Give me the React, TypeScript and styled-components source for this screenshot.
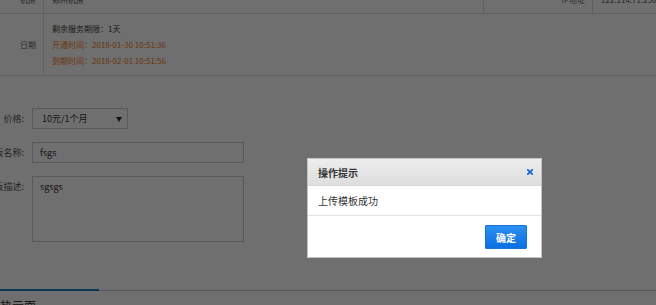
import styled, { createGlobalStyle } from 'styled-components'

const GlobalStyle = createGlobalStyle`
    html, body {
        margin: 0;
        padding: 0;
        background: #fff;
        overflow: hidden;
    }
    body {
        font-family: "Noto Sans CJK SC", "Noto Sans", sans-serif;
        color: #333;
    }
`;

const Page = styled.div`
    width: 656px;
    height: 305px;
    overflow: hidden;
    background: #fff;
    display: flex;
    flex-direction: column;
`;

const InfoTable = styled.div`
    margin-top: -15px;
    display: flex;
    flex-direction: column;
`;

const Row = styled.div<{ $cols: string; $h: number }>`
    display: grid;
    grid-template-columns: ${p => p.$cols};
    min-height: ${p => p.$h}px;
    border-bottom: 1px solid #ddd;
`;

const Label = styled.div`
    display: flex;
    align-items: center;
    justify-content: flex-end;
    padding-right: 7px;
    font-size: 8px;
    color: #666;
    border-right: 1px solid #ddd;
`;

const Value = styled.div<{ $last?: boolean }>`
    display: flex;
    flex-direction: column;
    justify-content: center;
    padding-left: 8px;
    font-size: 8px;
    color: #555;
    white-space: nowrap;
    border-right: ${p => (p.$last ? 'none' : '1px solid #ddd')};
`;

const Lines = styled.div`
    display: flex;
    flex-direction: column;
    padding: 7px 0 6px 8px;
`;

const Line = styled.div<{ $orange?: boolean }>`
    font-size: 8px;
    line-height: 16px;
    color: ${p => (p.$orange ? '#f57a1c' : '#3a3a3a')};
    white-space: nowrap;
`;

const Form = styled.div`
    display: grid;
    grid-template-columns: 24px 1fr;
    column-gap: 8px;
    row-gap: 13px;
    padding-top: 32px;
`;

const FieldLabel = styled.div`
    display: flex;
    justify-content: flex-end;
    font-size: 9px;
    line-height: 21px;
    color: #555;
    white-space: nowrap;
`;

const Select = styled.div`
    box-sizing: border-box;
    width: 96px;
    height: 21px;
    border: 1px solid #ccc;
    display: flex;
    align-items: center;
    justify-content: space-between;
    padding: 0 5px 0 9px;
    font-size: 9px;
    color: #333;
`;

const Caret = styled.span`
    font-size: 6px;
    color: #222;
`;

const Input = styled.div`
    box-sizing: border-box;
    width: 212px;
    height: 21px;
    border: 1px solid #ccc;
    padding-left: 7px;
    font-size: 9px;
    line-height: 19px;
    color: #333;
`;

const TextArea = styled(Input)`
    height: 66px;
    padding-top: 4px;
    line-height: 12px;
`;

const TabBar = styled.div`
    margin-top: 48px;
    border-top: 1px solid #c8c8c8;
    display: flex;
`;

const Tab = styled.div`
    width: 99px;
    margin-top: -2px;
    border-top: 2px solid #1683bd;
    padding-top: 6px;
    font-size: 12px;
    color: #333;
    white-space: nowrap;
`;

const Overlay = styled.div`
    position: fixed;
    inset: 0;
    background: rgba(0, 0, 0, 0.565);
`;

const Dialog = styled.div`
    position: absolute;
    left: 307px;
    top: 158px;
    width: 235px;
    box-sizing: border-box;
    background: #fff;
    border: 1px solid #c4c4c4;
    display: flex;
    flex-direction: column;
`;

const DialogHeader = styled.div`
    height: 26px;
    display: flex;
    align-items: center;
    justify-content: space-between;
    padding: 0 8px 0 10px;
    background: linear-gradient(#ededed, #dedede);
    border-bottom: 1px solid #d6d6d6;
    font-size: 10px;
    font-weight: bold;
    color: #333;
`;

const Close = styled.svg`
    width: 6px;
    height: 6px;
`;

const DialogBody = styled.div`
    height: 29px;
    display: flex;
    align-items: center;
    padding: 0 10px;
    font-size: 10px;
    color: #333;
    border-bottom: 1px solid #e2e2e2;
`;

const DialogFooter = styled.div`
    height: 41px;
    display: flex;
    align-items: center;
    justify-content: flex-end;
    padding-right: 14px;
`;

const Button = styled.button`
    width: 42px;
    height: 24px;
    margin-top: 1px;
    border: 1px solid #1a72d8;
    background: linear-gradient(#2b8ff2, #0c6fe2);
    color: #fff;
    font-family: inherit;
    font-size: 10px;
    font-weight: bold;
    padding: 0;
    border-radius: 1px;
`;

export default function App() {
    return (
        <>
            <GlobalStyle />
            <Page>
                <InfoTable>
                    <Row $cols="44px 440px 109px 1fr" $h={28}>
                        <Label>机房</Label>
                        <Value>郑州机房</Value>
                        <Label>IP地址</Label>
                        <Value $last>122.114.71.230</Value>
                    </Row>
                    <Row $cols="44px 1fr" $h={60}>
                        <Label>日期</Label>
                        <Lines>
                            <Line>剩余服务期限：1天</Line>
                            <Line $orange>开通时间：2018-01-30 10:51:36</Line>
                            <Line $orange>到期时间：2018-02-01 10:51:56</Line>
                        </Lines>
                    </Row>
                </InfoTable>
                <Form>
                    <FieldLabel>价格:</FieldLabel>
                    <Select>
                        <span>10元/1个月</span>
                        <Caret>▼</Caret>
                    </Select>
                    <FieldLabel>模板名称:</FieldLabel>
                    <Input>fsgs</Input>
                    <FieldLabel>模板描述:</FieldLabel>
                    <TextArea>sgsgs</TextArea>
                </Form>
                <TabBar>
                    <Tab>热示面</Tab>
                </TabBar>
            </Page>
            <Overlay>
                <Dialog>
                    <DialogHeader>
                        <span>操作提示</span>
                        <Close viewBox="0 0 6 6">
                            <path d="M0.8 0.8 L5.2 5.2 M5.2 0.8 L0.8 5.2" stroke="#1668d4" strokeWidth="1.8" strokeLinecap="square" />
                        </Close>
                    </DialogHeader>
                    <DialogBody>上传模板成功</DialogBody>
                    <DialogFooter>
                        <Button>确定</Button>
                    </DialogFooter>
                </Dialog>
            </Overlay>
        </>
    );
}
